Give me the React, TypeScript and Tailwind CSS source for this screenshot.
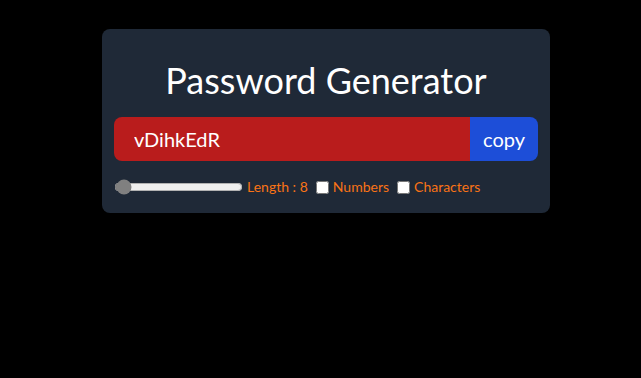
import { useState, useCallback, useEffect } from 'react';

function App() {
  const [length, setLength] = useState(8);
  const [numberAllowed, setNumberAllowed] = useState(false);
  const [charAllowed, setCharAllowed] = useState(false);
  const [password] = useState('vDihkEdR');

  const copyPassword = useCallback(() => {
    navigator.clipboard?.writeText(password);
  }, [password]);

  useEffect(() => {}, [length, numberAllowed, charAllowed]);

  return (
    <div className="min-h-[378px] w-full bg-black pt-[29px] font-['Lato',sans-serif]">
      <div className="ml-[102px] w-[448px] rounded-lg bg-[#1f2937] px-3 pb-[16px] pt-[31px] text-[#f97316]">
        <h1 className="mb-[17px] text-center text-[36px] leading-10 text-white">Password Generator</h1>
        <div className="mb-4 flex overflow-hidden rounded-lg">
          <input
            type="text"
            value={password}
            readOnly
            placeholder="Password"
            className="h-[44px] w-full bg-[#b91c1c] px-5 text-xl text-white outline-none"
          />
          <button
            onClick={copyPassword}
            className="shrink-0 bg-[#1d4ed8] px-[13px] text-xl text-white outline-none"
          >
            copy
          </button>
        </div>
        <div className="flex items-center gap-x-2 text-sm">
          <div className="flex items-center gap-x-1">
            <input
              type="range"
              min={6}
              max={100}
              value={length}
              className="cursor-pointer accent-[#808080]"
              onChange={(e) => setLength(Number(e.target.value))}
            />
            <label>Length : {length}</label>
          </div>
          <div className="flex items-center gap-x-1">
            <input
              type="checkbox"
              checked={numberAllowed}
              id="numberInput"
              onChange={() => setNumberAllowed((prev) => !prev)}
            />
            <label htmlFor="numberInput">Numbers</label>
          </div>
          <div className="flex items-center gap-x-1">
            <input
              type="checkbox"
              checked={charAllowed}
              id="characterInput"
              onChange={() => setCharAllowed((prev) => !prev)}
            />
            <label htmlFor="characterInput">Characters</label>
          </div>
        </div>
      </div>
    </div>
  );
}

export default App;
